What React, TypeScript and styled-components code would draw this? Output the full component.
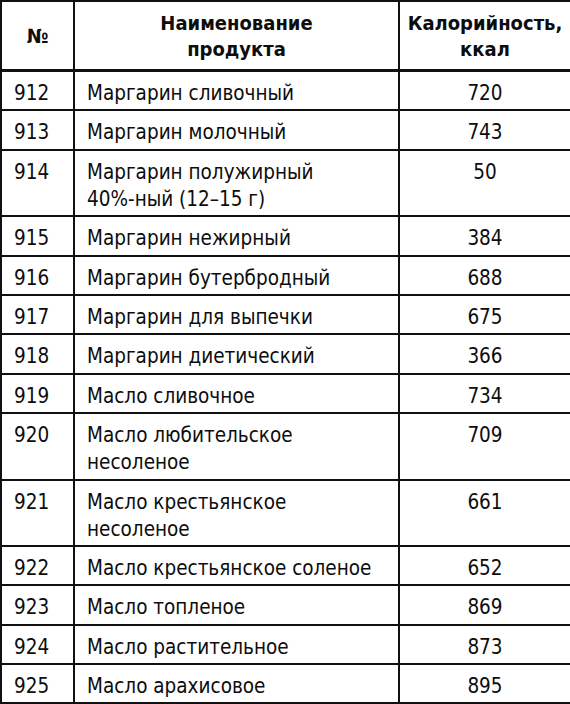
import React from 'react';
import styled, { createGlobalStyle } from 'styled-components';

const Global = createGlobalStyle`
  html, body {
    margin: 0;
    padding: 0;
    background: #fff;
  }
  body {
    font-family: "DejaVu Sans Condensed", "Liberation Sans Narrow", "Arial Narrow", sans-serif;
    color: #0d0d0d;
  }
`;

const Table = styled.table`
  width: 570px;
  border-collapse: collapse;
  border: 2px solid #111;
  table-layout: fixed;
  font-size: 20.5px;
`;

const HeadCell = styled.th`
  height: 67px;
  padding: 0 4px;
  border: 2px solid #111;
  border-bottom-width: 3px;
  font-weight: bold;
  font-size: 20px;
  line-height: 26px;
  text-align: center;
  vertical-align: middle;
`;

const Cell = styled.td<{ $align?: 'left' | 'center' }>`
  padding: 8px 12px 2.4px;
  border: 2px solid #111;
  line-height: 27px;
  vertical-align: top;
  text-align: ${p => p.$align || 'left'};
  white-space: nowrap;
`;

type Row = { n: number; name: string[]; kcal: number };

const rows: Row[] = [
  { n: 912, name: ['Маргарин сливочный'], kcal: 720 },
  { n: 913, name: ['Маргарин молочный'], kcal: 743 },
  { n: 914, name: ['Маргарин полужирный', '40%-ный (12–15 г)'], kcal: 50 },
  { n: 915, name: ['Маргарин нежирный'], kcal: 384 },
  { n: 916, name: ['Маргарин бутербродный'], kcal: 688 },
  { n: 917, name: ['Маргарин для выпечки'], kcal: 675 },
  { n: 918, name: ['Маргарин диетический'], kcal: 366 },
  { n: 919, name: ['Масло сливочное'], kcal: 734 },
  { n: 920, name: ['Масло любительское', 'несоленое'], kcal: 709 },
  { n: 921, name: ['Масло крестьянское', 'несоленое'], kcal: 661 },
  { n: 922, name: ['Масло крестьянское соленое'], kcal: 652 },
  { n: 923, name: ['Масло топленое'], kcal: 869 },
  { n: 924, name: ['Масло растительное'], kcal: 873 },
  { n: 925, name: ['Масло арахисовое'], kcal: 895 },
];

export default function App() {
  return (
    <>
      <Global />
      <Table>
        <colgroup>
          <col style={{ width: 73 }} />
          <col style={{ width: 325 }} />
          <col style={{ width: 172 }} />
        </colgroup>
        <thead>
          <tr>
            <HeadCell>№</HeadCell>
            <HeadCell>Наименование<br />продукта</HeadCell>
            <HeadCell>Калорийность,<br />ккал</HeadCell>
          </tr>
        </thead>
        <tbody>
          {rows.map(r => (
            <tr key={r.n}>
              <Cell>{r.n}</Cell>
              <Cell>
                {r.name.map((line, i) => (
                  <React.Fragment key={i}>
                    {i > 0 && <br />}
                    {line}
                  </React.Fragment>
                ))}
              </Cell>
              <Cell $align="center">{r.kcal}</Cell>
            </tr>
          ))}
        </tbody>
      </Table>
    </>
  );
}
